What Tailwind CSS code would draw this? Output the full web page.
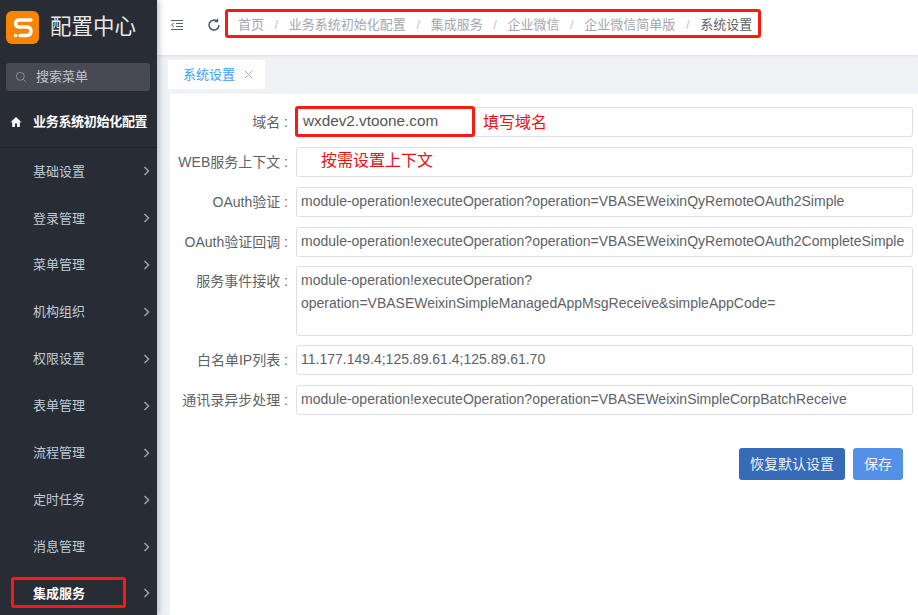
<!DOCTYPE html>
<html lang="zh">
<head>
    <meta charset="UTF-8">
    <title>配置中心</title>
    <script src="https://cdn.jsdelivr.net/npm/@tailwindcss/browser@4"></script>
</head>
<body class="w-[918px] h-[615px] overflow-hidden bg-[#f0f2f5] flex font-['Liberation_Sans','Noto_Sans_CJK_SC',sans-serif] text-[14px] text-[#606266]">
    <!-- sidebar -->
    <aside class="w-[157px] h-[615px] shrink-0 bg-[#282c34] flex flex-col relative shadow-[2px_0_6px_rgba(0,21,41,0.25)] z-10 text-[13px]">
        <div class="h-[55px] flex items-center pl-[6px] gap-[11px] shrink-0">
            <div class="w-[33px] h-[33px] rounded-[6px] bg-[#f98400] flex items-center justify-center">
                <svg width="24" height="22" viewBox="0 0 24 22" fill="none" stroke="#fff" stroke-width="3.4" stroke-linecap="round" stroke-linejoin="round"><path d="M20 3H8.500C5.500 3 4.500 5 4.500 6.800 4.500 8.800 6 10 8.500 10H15.500C18.500 10 20 11.700 20 14 20 16.500 18.500 18.500 15.500 18.500H9"/><path d="M4.500 18.500H4.700"/></svg>
            </div>
            <span class="text-[21.500px] text-[#e8e8e8] leading-none">配置中心</span>
        </div>
        <div class="mt-[8px] ml-[6px] mr-[7px] h-[28px] rounded-[3px] bg-[#474a53] flex items-center pl-[9px] gap-[9px] shrink-0">
            <svg width="12" height="12" viewBox="0 0 12 12" fill="none" stroke="#8b8e96" stroke-width="1"><circle cx="5.300" cy="5.300" r="4"/><path d="M8.300 8.300 11 11"/></svg>
            <span class="text-[#c0c4cc]">搜索菜单</span>
        </div>
        <div class="mt-[5px] h-[52px] flex items-center pl-[10px] border-b border-[#1f2229] shrink-0">
            <svg width="12" height="12" viewBox="0 0 12 12" fill="#fff"><path d="M6 1 .5 6.300H2.200V11H5V7.600H7V11H9.800V6.300H11.500Z"/></svg>
            <span class="ml-[11px] text-white font-bold tracking-[-0.3px]">业务系统初始化配置</span>
        </div>
        <nav class="flex flex-col text-[#bfcbd9]">
            <div class="h-[46.900px] flex items-center justify-between pl-[33px] pr-[7px]"><span>基础设置</span><svg width="7" height="10" viewBox="0 0 7 10" fill="none" stroke="#9aa0a8" stroke-width="1.600"><path d="M1.500 1 5.500 5 1.500 9"/></svg></div>
            <div class="h-[46.900px] flex items-center justify-between pl-[33px] pr-[7px]"><span>登录管理</span><svg width="7" height="10" viewBox="0 0 7 10" fill="none" stroke="#9aa0a8" stroke-width="1.600"><path d="M1.500 1 5.500 5 1.500 9"/></svg></div>
            <div class="h-[46.900px] flex items-center justify-between pl-[33px] pr-[7px]"><span>菜单管理</span><svg width="7" height="10" viewBox="0 0 7 10" fill="none" stroke="#9aa0a8" stroke-width="1.600"><path d="M1.500 1 5.500 5 1.500 9"/></svg></div>
            <div class="h-[46.900px] flex items-center justify-between pl-[33px] pr-[7px]"><span>机构组织</span><svg width="7" height="10" viewBox="0 0 7 10" fill="none" stroke="#9aa0a8" stroke-width="1.600"><path d="M1.500 1 5.500 5 1.500 9"/></svg></div>
            <div class="h-[46.900px] flex items-center justify-between pl-[33px] pr-[7px]"><span>权限设置</span><svg width="7" height="10" viewBox="0 0 7 10" fill="none" stroke="#9aa0a8" stroke-width="1.600"><path d="M1.500 1 5.500 5 1.500 9"/></svg></div>
            <div class="h-[46.900px] flex items-center justify-between pl-[33px] pr-[7px]"><span>表单管理</span><svg width="7" height="10" viewBox="0 0 7 10" fill="none" stroke="#9aa0a8" stroke-width="1.600"><path d="M1.500 1 5.500 5 1.500 9"/></svg></div>
            <div class="h-[46.900px] flex items-center justify-between pl-[33px] pr-[7px]"><span>流程管理</span><svg width="7" height="10" viewBox="0 0 7 10" fill="none" stroke="#9aa0a8" stroke-width="1.600"><path d="M1.500 1 5.500 5 1.500 9"/></svg></div>
            <div class="h-[46.900px] flex items-center justify-between pl-[33px] pr-[7px]"><span>定时任务</span><svg width="7" height="10" viewBox="0 0 7 10" fill="none" stroke="#9aa0a8" stroke-width="1.600"><path d="M1.500 1 5.500 5 1.500 9"/></svg></div>
            <div class="h-[46.900px] flex items-center justify-between pl-[33px] pr-[7px]"><span>消息管理</span><svg width="7" height="10" viewBox="0 0 7 10" fill="none" stroke="#9aa0a8" stroke-width="1.600"><path d="M1.500 1 5.500 5 1.500 9"/></svg></div>
            <div class="h-[46.900px] flex items-center justify-between pl-[33px] pr-[7px]"><span class="text-white font-bold">集成服务</span><svg width="7" height="10" viewBox="0 0 7 10" fill="none" stroke="#9aa0a8" stroke-width="1.600"><path d="M1.500 1 5.500 5 1.500 9"/></svg></div>
        </nav>
        <!-- annotation round the menu item -->
        <div class="absolute left-[11px] top-[577px] w-[115px] h-[31px] border-[3px] border-[#fb1a10] rounded-[3px]"></div>
    </aside>

    <main class="flex-1 flex flex-col min-w-0">
        <!-- top bar -->
        <header class="h-[55px] bg-white shadow-[0_1px_4px_rgba(0,21,41,0.08)] flex items-center pl-[13px] pb-[5px] shrink-0 relative">
            <svg width="14" height="12" viewBox="0 0 14 12" fill="none" stroke="#5a6068" stroke-width="1"><path d="M1 1.500H13M6 4.500H13M6 7.500H13M1 10.500H13"/><path d="M4 3.800 1.500 6 4 8.200" /></svg>
            <svg class="ml-[23px]" width="14" height="14" viewBox="0 0 14 14" fill="none" stroke="#4f5560" stroke-width="1.500"><path d="M12 7A5 5 0 1 1 10.200 3.200"/><path d="M10.500 .8V3.700H7.700" stroke-width="1.300"/></svg>
            <nav class="ml-[17px] flex items-center text-[13px] whitespace-nowrap">
                <span class="text-[#a3a6ad]">首页</span><span class="mx-[10.600px] text-[#c0c4cc]">/</span>
                <span class="text-[#a3a6ad]">业务系统初始化配置</span><span class="mx-[10.600px] text-[#c0c4cc]">/</span>
                <span class="text-[#a3a6ad]">集成服务</span><span class="mx-[10.600px] text-[#c0c4cc]">/</span>
                <span class="text-[#a3a6ad]">企业微信</span><span class="mx-[10.600px] text-[#c0c4cc]">/</span>
                <span class="text-[#a3a6ad]">企业微信简单版</span><span class="mx-[10.600px] text-[#c0c4cc]">/</span>
                <span class="text-[#606266]">系统设置</span>
            </nav>
            <div class="absolute left-[68px] top-[9px] w-[536px] h-[29px] border-[3px] border-[#fb1a10] rounded-[3px]"></div>
        </header>

        <!-- tabs -->
        <div class="h-[34px] pl-[11px] pt-[5px] shrink-0 text-[13px]">
            <div class="w-[97px] h-[29px] bg-white rounded-[2px] flex items-center pl-[15px] gap-[9px]">
                <span class="text-[#409eff]">系统设置</span>
                <svg width="9" height="9" viewBox="0 0 9 9" fill="none" stroke="#a8abb2" stroke-width="1"><path d="M.7.7 8.300 8.300M8.300.7.7 8.300"/></svg>
            </div>
        </div>

        <!-- form -->
        <section class="ml-[13px] mt-[5px] flex-1 bg-white pl-[8px] pr-[5px] pt-[13px] flex flex-col gap-[10px] relative">
            <div class="flex gap-[8px]"><label class="w-[110px] h-[30px] flex items-center justify-end whitespace-nowrap">域名 :</label><div class="flex-1 h-[30px] border border-[#dcdfe6] rounded-[3px] pl-[4px] flex items-center"></div></div>
            <div class="flex gap-[8px]"><label class="w-[110px] h-[30px] flex items-center justify-end whitespace-nowrap">WEB服务上下文 :</label><div class="flex-1 h-[30px] border border-[#dcdfe6] rounded-[3px] flex items-center"></div></div>
            <div class="flex gap-[8px]"><label class="w-[110px] h-[30px] flex items-center justify-end whitespace-nowrap">OAuth验证 :</label><div class="flex-1 h-[30px] border border-[#dcdfe6] rounded-[3px] pl-[4px] pb-[2px] flex items-center whitespace-nowrap">module-operation!executeOperation?operation=VBASEWeixinQyRemoteOAuth2Simple</div></div>
            <div class="flex gap-[8px]"><label class="w-[110px] h-[30px] flex items-center justify-end whitespace-nowrap">OAuth验证回调 :</label><div class="flex-1 h-[30px] border border-[#dcdfe6] rounded-[3px] pl-[4px] pb-[2px] flex items-center whitespace-nowrap overflow-hidden">module-operation!executeOperation?operation=VBASEWeixinQyRemoteOAuth2CompleteSimple</div></div>
            <div class="flex gap-[8px] -mt-[1px]"><label class="w-[110px] h-[30px] flex items-center justify-end whitespace-nowrap">服务事件接收 :</label><div class="flex-1 h-[70px] border border-[#dcdfe6] rounded-[3px] pl-[4px] py-[2px] leading-[23px]">module-operation!executeOperation?<br>operation=VBASEWeixinSimpleManagedAppMsgReceive&amp;simpleAppCode=</div></div>
            <div class="flex gap-[8px] -mt-[1px]"><label class="w-[110px] h-[30px] flex items-center justify-end whitespace-nowrap">白名单IP列表 :</label><div class="flex-1 h-[30px] border border-[#dcdfe6] rounded-[3px] pl-[4px] pb-[2px] flex items-center">11.177.149.4;125.89.61.4;125.89.61.70</div></div>
            <div class="flex gap-[8px]"><label class="w-[110px] h-[30px] flex items-center justify-end whitespace-nowrap">通讯录异步处理 :</label><div class="flex-1 h-[30px] border border-[#dcdfe6] rounded-[3px] pl-[4px] pb-[2px] flex items-center">module-operation!executeOperation?operation=VBASEWeixinSimpleCorpBatchReceive</div></div>
            <div class="flex justify-end gap-[8px] mt-[23px] pr-[10px]">
                <button class="w-[106px] h-[32px] rounded-[3px] bg-[#366bb8] text-[#eef2f8]">恢复默认设置</button>
                <button class="w-[50px] h-[32px] rounded-[3px] bg-[#5590e8] text-[#eef2f8]">保存</button>
            </div>
            <!-- annotations on top of the form -->
            <div class="absolute left-[125px] top-[12px] w-[180px] h-[31px] border-[3px] border-[#fb1a10] rounded-[3px] flex items-center pl-[5px] text-[15.300px] text-[#555] bg-white">wxdev2.vtoone.com</div>
            <span class="absolute left-[313px] top-[17px] text-[16px] text-[#f01010]">填写域名</span>
            <span class="absolute left-[151px] top-[55px] text-[16px] text-[#f01010]">按需设置上下文</span>
        </section>
    </main>
</body>
</html>
